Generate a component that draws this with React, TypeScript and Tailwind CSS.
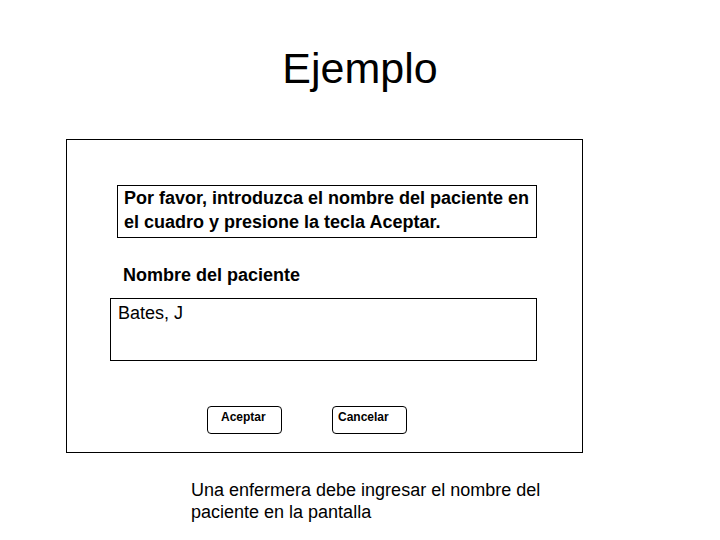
import React from 'react';

// Diapositiva: ejemplo de pantalla para ingresar el nombre del paciente
export default function App() {
  return (
    <div className="w-[720px] h-[540px] bg-white text-black overflow-hidden" style={{ fontFamily: '"Liberation Sans", Arial, sans-serif' }}>
      {/* Título */}
      <h1 className="pt-[47px] text-center text-[43px] leading-none font-normal">Ejemplo</h1>

      {/* Marco de la pantalla */}
      <div className="mt-[49px] ml-[66px] w-[517px] h-[314px] border border-black flex flex-col">
        <div className="mt-[45px] ml-[50px] w-[420px] h-[53px] border border-black pl-[6px] text-[18px] leading-[24px] font-bold whitespace-nowrap">
          Por favor, introduzca el nombre del paciente en
          <br />
          el cuadro y presione la tecla Aceptar.
        </div>

        <label className="mt-[25px] ml-[56px] text-[18px] leading-[24px] font-bold">Nombre del paciente</label>

        <div className="mt-[11px] ml-[43px] w-[427px] h-[63px] border border-black pl-[7px] pt-[2px] text-[18px] leading-[24px]">
          Bates, J
        </div>

        <div className="mt-[45px] ml-[140px] flex gap-[50px]">
          <button className="w-[75px] h-[28px] border border-black rounded-[4px] pl-[13px] pt-[3px] flex items-start text-[12px] leading-[14px] font-bold">
            Aceptar
          </button>
          <button className="w-[75px] h-[28px] border border-black rounded-[4px] pl-[5px] pt-[3px] flex items-start text-[12px] leading-[14px] font-bold">
            Cancelar
          </button>
        </div>
      </div>

      {/* Pie */}
      <p className="mt-[26px] ml-[191px] text-[18px] leading-[22px]">
        Una enfermera debe ingresar el nombre del
        <br />
        paciente en la pantalla
      </p>
    </div>
  );
}
